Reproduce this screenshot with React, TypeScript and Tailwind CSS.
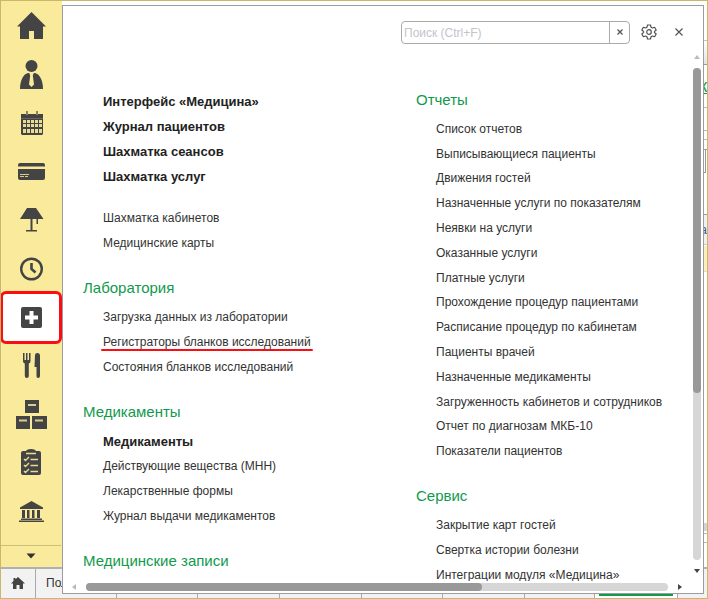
import type { ReactNode } from 'react';
import clsx from 'clsx';

type Item = { label: string; bold?: boolean; marked?: boolean };

const mainItems: Item[] = [
  { label: 'Интерфейс «Медицина»', bold: true },
  { label: 'Журнал пациентов', bold: true },
  { label: 'Шахматка сеансов', bold: true },
  { label: 'Шахматка услуг', bold: true },
];

const roomItems: Item[] = [{ label: 'Шахматка кабинетов' }, { label: 'Медицинские карты' }];

const labItems: Item[] = [
  { label: 'Загрузка данных из лаборатории' },
  { label: 'Регистраторы бланков исследований', marked: true },
  { label: 'Состояния бланков исследований' },
];

const drugItems: Item[] = [
  { label: 'Медикаменты', bold: true },
  { label: 'Действующие вещества (МНН)' },
  { label: 'Лекарственные формы' },
  { label: 'Журнал выдачи медикаментов' },
];

const reportItems: Item[] = [
  { label: 'Список отчетов' },
  { label: 'Выписывающиеся пациенты' },
  { label: 'Движения гостей' },
  { label: 'Назначенные услуги по показателям' },
  { label: 'Неявки на услуги' },
  { label: 'Оказанные услуги' },
  { label: 'Платные услуги' },
  { label: 'Прохождение процедур пациентами' },
  { label: 'Расписание процедур по кабинетам' },
  { label: 'Пациенты врачей' },
  { label: 'Назначенные медикаменты' },
  { label: 'Загруженность кабинетов и сотрудников' },
  { label: 'Отчет по диагнозам МКБ-10' },
  { label: 'Показатели пациентов' },
];

const serviceItems: Item[] = [
  { label: 'Закрытие карт гостей' },
  { label: 'Свертка истории болезни' },
  { label: 'Интеграции модуля «Медицина»' },
];

const sections: { name: string; icon: ReactNode; active?: boolean }[] = [
  {
    name: 'Главное',
    icon: <path d="M16.5 2 31 16.5H28V29H19V21H14V29H5V16.5H2Z" />,
  },
  {
    name: 'Гости',
    icon: (
      <>
        <circle cx="16.5" cy="7" r="6" />
        <path d="M5 30C5 22 8 15 13 14H20C25 15 28 22 28 30Z" />
        <path d="M14 13.5H19L17.8 16.5 19 25.5 16.5 28 14 25.5 15.2 16.5Z" fill="#f9eb9b" />
      </>
    ),
  },
  {
    name: 'Календарь',
    icon: (
      <>
        <path d="M6 7H28V27L27 28H7L6 27Z" />
        <path d="M11 4H13V8H11ZM21 4H23V8H21Z" fill="#8b8463" />
        <path d="M6 11.5H28" stroke="#6b6753" />
        <path
          d="M8 13H11V16H8ZM12 13H15V16H12ZM16 13H19V16H16ZM20 13H23V16H20ZM24 13H27V16H24ZM8 17H11V20H8ZM12 17H15V20H12ZM16 17H19V20H16ZM20 17H23V20H20ZM24 17H27V20H24ZM8 22H11V26H8ZM12 22H15V26H12ZM16 22H19V26H16ZM20 22H23V26H20ZM24 22H27V26H24Z"
          fill="#e6da94"
        />
      </>
    ),
  },
  {
    name: 'Оплаты',
    icon: (
      <>
        <path d="M5 7H28Q30 7 30 9V10.5H3V9Q3 7 5 7ZM3 13H30V22Q30 24 28 24H5Q3 24 3 22Z" />
        <path d="M5 18.5H14M5 20.5H9M10 20.5H13" stroke="#d6ca88" />
      </>
    ),
  },
  {
    name: 'Номерной фонд',
    icon: <path d="M12 4H21L28.5 15H23V20H21.5V15H17.5V26H22V27.5H11V26H15.5V15H5Z" />,
  },
  {
    name: 'Время',
    icon: (
      <>
        <circle cx="16.5" cy="16" r="10.3" fill="none" stroke="#444" strokeWidth="2.4" />
        <path d="M16.5 10V16L20.5 19.5" fill="none" stroke="#444" strokeWidth="2.6" />
      </>
    ),
  },
  {
    name: 'Медицина',
    active: true,
    icon: (
      <>
        <rect x="6" y="5" width="21" height="21" rx="2" />
        <path d="M14.5 9H18.5V13.5H23V17.5H18.5V22H14.5V17.5H10V13.5H14.5Z" fill="#fff" />
      </>
    ),
  },
  {
    name: 'Ресторан',
    icon: (
      <>
        <path d="M8 3H9.5V10H11V3H12.5V10H14V3H15.5V11Q15.5 13 13.8 13.5V26Q13.8 28 11.8 28 9.8 28 9.8 26V13.5Q8 13 8 11Z" />
        <path d="M20 5Q20 3 22.5 3 25 3 25 6V26Q25 28 23 28 21.5 28 21.5 26V17H19.5Z" />
      </>
    ),
  },
  {
    name: 'Склад',
    icon: (
      <>
        <path d="M10 1H24V14H10ZM1 17H15V30H1ZM17 17H32V30H17Z" />
        <path d="M13 5H21V7H13ZM4 20.5H12V22.5H4ZM20 20.5H28V22.5H20Z" fill="#d9ce8c" />
      </>
    ),
  },
  {
    name: 'Задачи',
    icon: (
      <>
        <path d="M8 4H11Q12 2 16 2 20 2 21 4H24Q26 4 26 6V26Q26 28 24 28H8Q6 28 6 26V6Q6 4 8 4Z" />
        <path
          d="M11 6.5H21M9 12L10.5 13.5 14 10M9 18L10.5 19.5 14 16M9 24L10.5 25.5 14 22M15.5 12.5H23M15.5 18.5H23M15.5 24.5H23"
          fill="none"
          stroke="#e6da94"
          strokeWidth="1.4"
        />
      </>
    ),
  },
  {
    name: 'Учет',
    icon: (
      <path d="M16.5 5 28 11.5V13H5V11.5ZM7 14H10V22H7ZM12 14H14.5V22H12ZM17 14H19.5V22H17ZM22 14H25V22H22ZM6 22.5H27V24H6ZM4 24.5H29V26H4Z" />
    ),
  },
];

function MenuList({ items, className }: { items: Item[]; className?: string }) {
  return (
    <ul className={clsx('grid auto-rows-fr pl-5', className)}>
      {items.map((item) => (
        <li key={item.label} className="flex items-center leading-[25px]">
          <a
            href="#"
            className={clsx(
              'relative whitespace-nowrap',
              item.bold && 'text-[13px] font-bold text-[#222]',
            )}
          >
            {item.label}
            {item.marked && (
              <span className="absolute -right-0.5 bottom-1 -left-0.5 h-0.5 rounded-full bg-[#fb0d14]" />
            )}
          </a>
        </li>
      ))}
    </ul>
  );
}

function MenuGroup({ title, items, listClass }: { title: string; items: Item[]; listClass?: string }) {
  return (
    <section className="flex flex-col gap-[5px]">
      <h2 className="text-[15px] leading-6 text-[#109a4c]">{title}</h2>
      <MenuList items={items} className={listClass} />
    </section>
  );
}

function Sidebar() {
  return (
    <nav className="flex w-[61px] flex-col bg-[#f9eb9b] pt-px pr-px">
      <div className="grid h-[534px] auto-rows-fr">
        {sections.map((section) => (
          <button
            key={section.name}
            type="button"
            aria-label={section.name}
            className={clsx(
              'relative flex items-center justify-center',
              section.active && 'bg-white',
            )}
          >
            <svg viewBox="0 0 32 32" className="h-8 w-8" fill="#444">
              {section.icon}
            </svg>
            {section.active && (
              <span className="absolute -inset-x-px -inset-y-0.5 z-20 rounded-md border-[3px] border-[#fb0d14]" />
            )}
          </button>
        ))}
      </div>
      <button
        type="button"
        aria-label="Еще"
        className="mt-auto flex h-[22px] items-center justify-center border-t border-[#cdbf76] pb-0.5"
      >
        <svg viewBox="0 0 10 6" className="h-[6px] w-[10px]" fill="#333">
          <path d="M0.5 0.5H9.5L5 5.5Z" />
        </svg>
      </button>
    </nav>
  );
}

// Form that stays open under the menu, only its right edge is visible
function FormBehind() {
  return (
    <div className="flex flex-1 flex-col items-stretch overflow-hidden bg-white text-right">
      <div className="h-10 border-b border-[#c4c4c4]" />
      <div className="h-6 border-b border-[#999] bg-linear-to-b from-white to-[#e4e4e4]" />
      <div className="flex h-[43px] items-center justify-end border-b border-[#bbb]">
        <a href="#" className="text-lg leading-5 text-[#109a4c] underline">
          к
        </a>
      </div>
      <div className="h-[23px] border-b border-[#bbb]" />
      <div className="h-[9px] border-b border-[#bbb]" />
      <div className="h-[10px] border-b border-[#999]" />
      <div className="mr-px h-[23px] border-r border-b border-[#999]" />
      <div className="h-[42px] border-b border-[#999]" />
      <div className="h-[30px] border-b border-[#ccc] bg-[#f0f0f0] leading-[30px] text-[#335b8c]">а</div>
      <div className="mt-px h-[26px] border-b border-[#ddd] bg-[#fbefbd]" />
      <div className="flex-1" />
      <div className="h-2 bg-[#d4d4d4]" />
      <div className="mt-0.5 h-2.5 border-y border-[#bbb]" />
      <div className="h-6" />
    </div>
  );
}

function TaskBar() {
  return (
    <div className="flex h-[31px] shrink-0 border-t-2 border-[#b0b0b0] bg-[#f2f2f2] text-[#333]">
      <button
        type="button"
        aria-label="Начальная страница"
        className="flex w-[35px] items-center justify-center border-r border-[#aaa] pb-0.5"
      >
        <svg viewBox="0 0 14 12" className="h-3 w-3.5" fill="#444">
          <path d="M7 0 14 6.5H12V12H8.5V8H5.5V12H2V6.5H0L2.5 4V1H4.5V2.3Z" />
        </svg>
      </button>
      <button type="button" className="w-[81px] border-r border-[#aaa] pb-0.5 pl-2.5 text-left">
        Пол.
      </button>
      <span className="w-[81px] border-r border-[#aaa]" />
      <span className="w-[82px] border-r border-[#aaa]" />
      <span className="w-[82px] border-r border-[#aaa]" />
      <span className="w-[81px] border-r border-[#aaa]" />
      <span className="w-[82px] border-r border-[#aaa]" />
      <span className="w-[70px] border-r border-[#aaa]" />
      <span className="flex w-[83px] items-end border-r border-[#aaa] bg-white px-1">
        <span className="mb-0.5 h-0.5 w-full bg-[#109a4c]" />
      </span>
    </div>
  );
}

function SectionMenu() {
  return (
    <div className="absolute top-1 right-[3px] bottom-1 left-[61px] z-10 flex flex-col border border-[#9c9ca0] bg-white">
      <div className="flex h-[43px] shrink-0 items-end justify-end pr-4 pb-[5px]">
        <div className="flex h-[23px] w-[229px] rounded-sm border border-[#aaa]">
          <input
            type="text"
            aria-label="Поиск"
            placeholder="Поиск (Ctrl+F)"
            className="min-w-0 flex-1 px-0.5 outline-none placeholder:text-[#c4c4cc]"
          />
          <button
            type="button"
            aria-label="Очистить"
            className="flex w-5 items-center justify-center border-l border-[#aaa] pb-px"
          >
            <svg viewBox="0 0 6 6" className="h-1.5 w-1.5" stroke="#555" strokeWidth="1.3">
              <path d="M0.5 0.5 5.5 5.5M5.5 0.5 0.5 5.5" />
            </svg>
          </button>
        </div>
        <button type="button" aria-label="Настройка" className="ml-[11px] flex h-6 w-4 items-center">
          <svg viewBox="0 0 16 16" className="h-4 w-4" fill="none" stroke="#505050" strokeWidth="1.2">
            <path
              d="M6.5 1H9.5L10 3.2 11.5 4 13.6 3.3 15.2 6 13.5 7.4V8.6L15.2 10 13.6 12.7 11.5 12 10 12.8 9.5 15H6.5L6 12.8 4.5 12 2.4 12.7 0.8 10 2.5 8.6V7.4L0.8 6 2.4 3.3 4.5 4 6 3.2Z"
              strokeLinejoin="round"
            />
            <circle cx="8" cy="8" r="2.3" />
          </svg>
        </button>
        <button
          type="button"
          aria-label="Закрыть"
          className="ml-[14px] flex h-6 w-4 items-center justify-center"
        >
          <svg viewBox="0 0 8 8" className="h-2 w-2" stroke="#555" strokeWidth="1.2">
            <path d="M0.5 0.5 7.5 7.5M7.5 0.5 0.5 7.5" />
          </svg>
        </button>
      </div>

      <div className="flex min-h-0 flex-1">
        <div className="grid min-w-0 flex-1 grid-cols-[333px_1fr] overflow-hidden pl-5">
          <div className="flex flex-col gap-5 pt-10">
            <div className="flex flex-col gap-[17px]">
              <MenuList items={mainItems} />
              <MenuList items={roomItems} />
            </div>
            <MenuGroup title="Лаборатория" items={labItems} />
            <MenuGroup title="Медикаменты" items={drugItems} />
            <MenuGroup title="Медицинские записи" items={[]} />
          </div>
          <div className="flex flex-col gap-5 pt-[39px]">
            <MenuGroup title="Отчеты" items={reportItems} listClass="h-[347px]" />
            <MenuGroup title="Сервис" items={serviceItems} />
          </div>
        </div>
        {/* Vertical scrollbar */}
        <div className="flex w-3 shrink-0 flex-col items-center pt-1.5 pb-2">
          <svg viewBox="0 0 6 4" className="h-1 w-1.5" fill="#bbb">
            <path d="M3 0 6 4H0Z" />
          </svg>
          <div className="my-[9px] w-2 flex-1 rounded-full bg-[#d6d6d6]">
            <div className="h-[66%] rounded-full bg-[#999]" />
          </div>
          <svg viewBox="0 0 6 4" className="h-1 w-1.5" fill="#444">
            <path d="M0 0H6L3 4Z" />
          </svg>
        </div>
      </div>

      {/* Horizontal scrollbar */}
      <div className="flex h-3 shrink-0 items-center pr-[21px] pb-px pl-[9px]">
        <svg viewBox="0 0 4 6" className="h-1.5 w-1" fill="#bbb">
          <path d="M4 0V6L0 3Z" />
        </svg>
        <div className="mx-2.5 h-2 flex-1 rounded-full bg-[#d6d6d6]">
          <div className="h-2 w-[68%] rounded-full bg-[#999]" />
        </div>
        <svg viewBox="0 0 4 6" className="h-1.5 w-1" fill="#444">
          <path d="M0 0 4 3 0 6Z" />
        </svg>
      </div>
    </div>
  );
}

export default function App() {
  return (
    <div className="relative flex h-screen min-h-[599px] flex-col overflow-hidden border border-[#c9b76b] bg-white font-['Liberation_Sans',Arial,sans-serif] text-xs text-[#333]">
      <div className="flex min-h-0 flex-1">
        <Sidebar />
        <FormBehind />
      </div>
      <TaskBar />
      <SectionMenu />
    </div>
  );
}
